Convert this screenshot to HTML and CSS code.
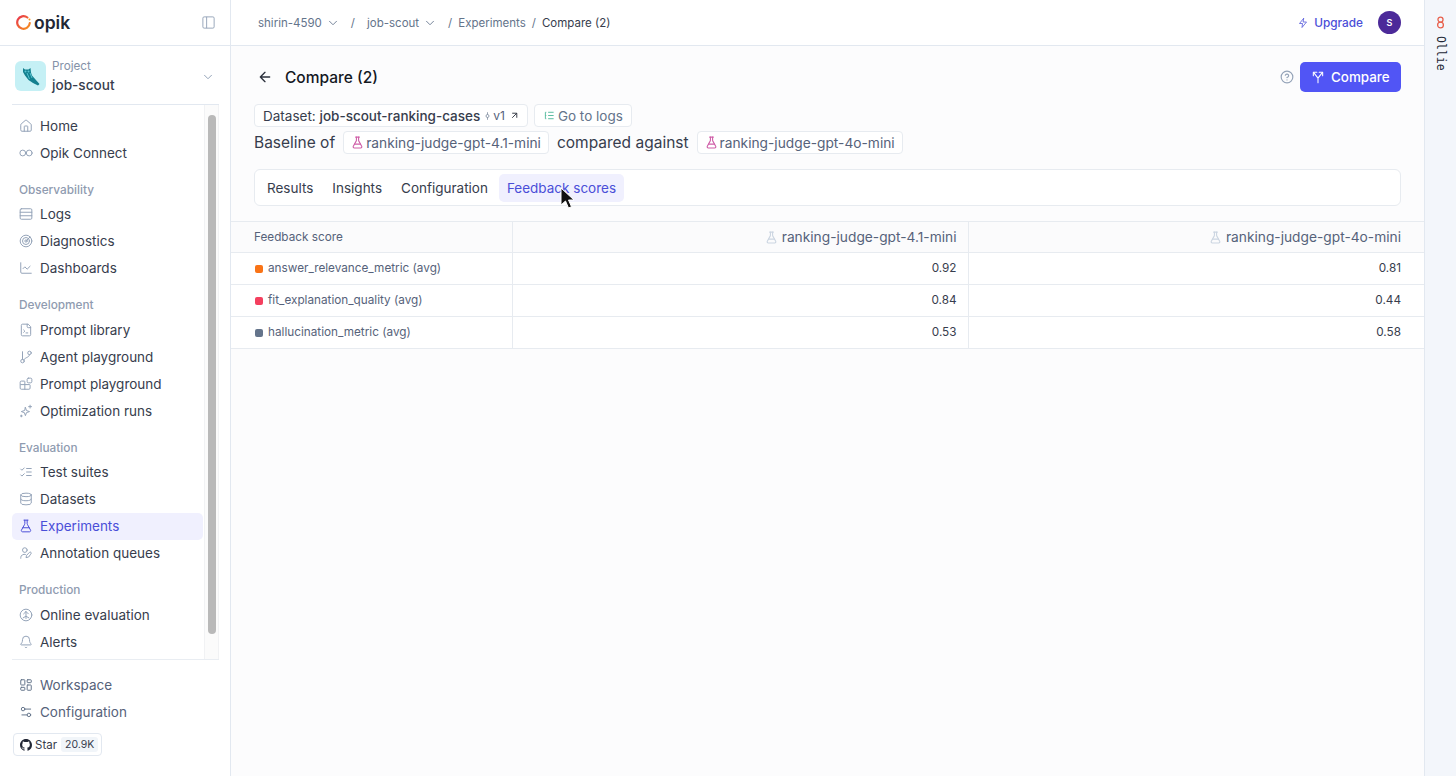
FILE: index.html
```html
<!DOCTYPE html>
<html lang="en">
<head>
    <meta charset="UTF-8">
    <meta name="viewport" content="width=device-width, initial-scale=1.0">
    <title>Compare (2)</title>
    <link rel="stylesheet" href="styles.css">
</head>
<body>

    <!-- Shared icons -->
    <svg class="icon-defs" xmlns="http://www.w3.org/2000/svg">
        <symbol id="i-home" viewBox="0 0 24 24"><path d="M15 21v-8a1 1 0 0 0-1-1h-4a1 1 0 0 0-1 1v8"/><path d="M3 10a2 2 0 0 1 .7-1.500l7-6a2 2 0 0 1 2.600 0l7 6A2 2 0 0 1 21 10v9a2 2 0 0 1-2 2H5a2 2 0 0 1-2-2z"/></symbol>
        <symbol id="i-connect" viewBox="0 0 24 24"><circle cx="6.500" cy="12" r="5"/><circle cx="17.500" cy="12" r="5"/></symbol>
        <symbol id="i-rows" viewBox="0 0 24 24"><rect x="2" y="3" width="20" height="18" rx="2"/><path d="M2 9h20M2 15h20"/></symbol>
        <symbol id="i-radar" viewBox="0 0 24 24"><circle cx="12" cy="12" r="10"/><circle cx="12" cy="12" r="6"/><circle cx="12" cy="12" r="2"/><path d="m13 11 6-6"/></symbol>
        <symbol id="i-chart" viewBox="0 0 24 24"><path d="M3 3v16a2 2 0 0 0 2 2h16"/><path d="m19 9-5 5-4-4-3 3"/></symbol>
        <symbol id="i-file" viewBox="0 0 24 24"><path d="M15 2H6a2 2 0 0 0-2 2v16a2 2 0 0 0 2 2h12a2 2 0 0 0 2-2V7z"/><path d="M14 2v4a2 2 0 0 0 2 2h4"/><path d="m8 12 2 2-2 2M12 17h3"/></symbol>
        <symbol id="i-branch" viewBox="0 0 24 24"><circle cx="6" cy="19" r="3"/><circle cx="18" cy="5" r="3"/><path d="M6 16V3"/><path d="M18 8c0 5-7 4-10 9"/></symbol>
        <symbol id="i-blocks" viewBox="0 0 24 24"><rect x="14" y="2" width="8" height="8" rx="2"/><path d="M10 21V8a1 1 0 0 0-1-1H4a2 2 0 0 0-2 2v10a2 2 0 0 0 2 2h13a2 2 0 0 0 2-2v-5a1 1 0 0 0-1-1H3"/></symbol>
        <symbol id="i-sparks" viewBox="0 0 24 24"><path d="M11 6l1.800 5.200L18 13l-5.200 1.800L11 20l-1.800-5.200L4 13l5.200-1.800z"/><path d="M19 2v5M16.500 4.500h5M4 19v3M2.500 20.500h3"/></symbol>
        <symbol id="i-checks" viewBox="0 0 24 24"><path d="m3 7 2 2 4-4M3 17l2 2 4-4M13 6h8M13 12h8M13 18h8"/></symbol>
        <symbol id="i-db" viewBox="0 0 24 24"><ellipse cx="12" cy="5" rx="9" ry="3"/><path d="M3 5v14a9 3 0 0 0 18 0V5"/><path d="M3 12a9 3 0 0 0 18 0"/></symbol>
        <symbol id="i-flask" viewBox="0 0 24 24"><path d="M14 2v6a2 2 0 0 0 .25 1l5.500 10a2 2 0 0 1-1.750 3H6a2 2 0 0 1-1.750-3l5.500-10A2 2 0 0 0 10 8V2"/><path d="M6.500 15h11"/><path d="M8.500 2h7"/></symbol>
        <symbol id="i-annotate" viewBox="0 0 24 24"><circle cx="10" cy="7" r="4"/><path d="M3 21v-1a6 6 0 0 1 8-5.600"/><path d="M20.500 13.500a1.800 1.800 0 0 0-2.600-2.600L13 16l-1 4 4-1z"/></symbol>
        <symbol id="i-online" viewBox="0 0 24 24"><circle cx="12" cy="12" r="10"/><path d="M12 6v12M8 10l4-4 4 4M7 17l5-3 5 3"/></symbol>
        <symbol id="i-bell" viewBox="0 0 24 24"><path d="M10.300 21a2 2 0 0 0 3.400 0"/><path d="M3.300 15.300A1 1 0 0 0 4 17h16a1 1 0 0 0 .7-1.700C19.400 14 18 12.500 18 8A6 6 0 0 0 6 8c0 4.500-1.400 6-2.700 7.300"/></symbol>
        <symbol id="i-grid" viewBox="0 0 24 24"><rect x="3" y="3" width="7" height="9" rx="1"/><rect x="14" y="3" width="7" height="5" rx="1"/><rect x="14" y="12" width="7" height="9" rx="1"/><rect x="3" y="16" width="7" height="5" rx="1"/></symbol>
        <symbol id="i-settings" viewBox="0 0 24 24"><path d="M20 7h-9M14 17H5"/><circle cx="17" cy="17" r="3"/><circle cx="7" cy="7" r="3"/></symbol>
        <symbol id="i-chevron" viewBox="0 0 24 24"><path d="m6 9 6 6 6-6"/></symbol>
        <symbol id="i-split" viewBox="0 0 24 24"><path d="M12 22v-8L5 5M12 14l7-9"/><path d="M4 10V4h6M20 10V4h-6"/></symbol>
    </svg>

    <div class="app">

        <!-- Sidebar -->
        <aside class="sidebar">
            <div class="logo-row">
                <div class="logo">
                    <svg class="logo-ring" viewBox="0.500 0.500 15 15" fill="none">
                        <defs><linearGradient id="ringGrad" x1="0" y1="0" x2="1" y2="1"><stop offset="0" stop-color="#e8344d"/><stop offset="1" stop-color="#f7941d"/></linearGradient></defs>
                        <path d="M11.900 3A6.300 6.300 0 1 0 14.300 8.500" stroke="url(#ringGrad)" stroke-width="2.200" stroke-linecap="round"/>
                        <circle cx="14" cy="5" r="1" fill="#f7941d"/>
                    </svg>
                    <span class="logo-text">opik</span>
                </div>
                <svg class="collapse-icon" viewBox="0 0 24 24"><rect x="3" y="3" width="18" height="18" rx="2"/><path d="M9 3v18"/></svg>
            </div>

            <div class="project">
                <div class="project-pic">
                    <svg viewBox="0 0 30 30" width="30" height="30">
                        <path d="M7 7l2 1.500h3.500l2-1.500.5 4.500 1 3 3.500 4 4 4.500-1.500 1.500-5-2.500-4.500-3-3.500-4.500-2-3.500z" fill="#13808f"/>
                        <path d="M11 12l2.500 6M14 12l2 5" stroke="#58c3d0" stroke-width="1"/>
                        <circle cx="9.500" cy="10.500" r="1" fill="#58c3d0"/>
                        <circle cx="12.500" cy="10.500" r="1" fill="#58c3d0"/>
                    </svg>
                </div>
                <div class="project-text">
                    <span class="project-label">Project</span>
                    <span class="project-name">job-scout</span>
                </div>
                <svg class="ico project-chevron"><use href="#i-chevron"/></svg>
            </div>

            <div class="nav-area">
                <nav class="nav-list">
                    <a class="nav-item"><svg class="ico"><use href="#i-home"/></svg>Home</a>
                    <a class="nav-item"><svg class="ico"><use href="#i-connect"/></svg>Opik Connect</a>

                    <div class="nav-label">Observability</div>
                    <a class="nav-item"><svg class="ico"><use href="#i-rows"/></svg>Logs</a>
                    <a class="nav-item"><svg class="ico"><use href="#i-radar"/></svg>Diagnostics</a>
                    <a class="nav-item"><svg class="ico"><use href="#i-chart"/></svg>Dashboards</a>

                    <div class="nav-label">Development</div>
                    <a class="nav-item"><svg class="ico"><use href="#i-file"/></svg>Prompt library</a>
                    <a class="nav-item"><svg class="ico"><use href="#i-branch"/></svg>Agent playground</a>
                    <a class="nav-item"><svg class="ico"><use href="#i-blocks"/></svg>Prompt playground</a>
                    <a class="nav-item"><svg class="ico"><use href="#i-sparks"/></svg>Optimization runs</a>

                    <div class="nav-label">Evaluation</div>
                    <a class="nav-item"><svg class="ico"><use href="#i-checks"/></svg>Test suites</a>
                    <a class="nav-item"><svg class="ico"><use href="#i-db"/></svg>Datasets</a>
                    <a class="nav-item active"><svg class="ico"><use href="#i-flask"/></svg>Experiments</a>
                    <a class="nav-item"><svg class="ico"><use href="#i-annotate"/></svg>Annotation queues</a>

                    <div class="nav-label">Production</div>
                    <a class="nav-item"><svg class="ico"><use href="#i-online"/></svg>Online evaluation</a>
                    <a class="nav-item"><svg class="ico"><use href="#i-bell"/></svg>Alerts</a>
                </nav>
                <div class="scroll-track"><div class="scroll-thumb"></div></div>
            </div>

            <div class="sidebar-foot">
                <a class="nav-item muted"><svg class="ico"><use href="#i-grid"/></svg>Workspace</a>
                <a class="nav-item muted"><svg class="ico"><use href="#i-settings"/></svg>Configuration</a>
                <div class="star">
                    <svg class="gh" viewBox="0 0 16 16"><path d="M8 0C3.580 0 0 3.580 0 8c0 3.540 2.290 6.530 5.470 7.590.4.070.55-.17.55-.38 0-.19-.01-.82-.01-1.490-2.010.37-2.530-.49-2.690-.94-.09-.23-.48-.94-.82-1.130-.28-.15-.68-.52-.01-.53.63-.01 1.080.58 1.230.82.72 1.210 1.870.87 2.330.66.07-.52.28-.87.51-1.070-1.780-.2-3.640-.89-3.640-3.950 0-.87.31-1.590.82-2.150-.08-.2-.36-1.020.08-2.120 0 0 .67-.21 2.200.82.64-.18 1.320-.27 2-.27s1.360.09 2 .27c1.530-1.040 2.200-.82 2.200-.82.44 1.100.16 1.920.08 2.120.51.56.82 1.270.82 2.150 0 3.070-1.870 3.750-3.650 3.950.29.25.54.73.54 1.480 0 1.070-.01 1.930-.01 2.200 0 .21.15.46.55.38A8.013 8.013 0 0 0 16 8c0-4.420-3.580-8-8-8z"/></svg>
                    <span>Star</span>
                    <span class="star-count">20.9K</span>
                </div>
            </div>
        </aside>

        <!-- Main column -->
        <div class="main">
            <header class="topbar">
                <div class="crumbs">
                    <span class="crumb">shirin-4590<svg class="ico-sm"><use href="#i-chevron"/></svg></span>
                    <span class="sep sep-wide">/</span>
                    <span class="crumb">job-scout<svg class="ico-sm"><use href="#i-chevron"/></svg></span>
                    <span class="sep sep-tail">/</span>
                    <span class="crumb">Experiments</span>
                    <span class="sep">/</span>
                    <span class="crumb current">Compare (2)</span>
                </div>
                <div class="top-right">
                    <a class="upgrade"><svg class="ico-sm" viewBox="0 0 24 24"><path d="M13 3 5 13h6l-1 8 9-11h-6z"/></svg>Upgrade</a>
                    <span class="avatar">S</span>
                </div>
            </header>

            <main class="content">
                <div class="title-row">
                    <div class="title-left">
                        <svg class="back" viewBox="0 0 24 24"><path d="m12 19-7-7 7-7M19 12H5"/></svg>
                        <h1>Compare (2)</h1>
                    </div>
                    <div class="title-right">
                        <svg class="help" viewBox="0 0 24 24"><circle cx="12" cy="12" r="10"/><path d="M9.100 9a3 3 0 0 1 5.800 1c0 2-3 3-3 3M12 17h.01"/></svg>
                        <button class="button"><svg class="ico-btn"><use href="#i-split"/></svg>Compare</button>
                    </div>
                </div>

                <div class="chip-row">
                    <span class="chip dataset">Dataset:&nbsp;<b>job-scout-ranking-cases</b>
                        <span class="version"><svg viewBox="0 0 24 24"><path d="M12 2v6M12 16v6"/><circle cx="12" cy="12" r="4"/></svg>v1</span>
                        <svg class="out" viewBox="0 0 24 24"><path d="M7 7h10v10M7 17 17 7"/></svg>
                    </span>
                    <span class="chip logs"><svg viewBox="0 0 24 24"><path d="M3 5h2M3 12h2M3 19h2M9 5h12M9 12h12M9 19h12M3 5v14"/></svg>Go to logs</span>
                </div>

                <div class="chip-row baseline">
                    <span>Baseline of</span>
                    <span class="chip exp"><svg><use href="#i-flask"/></svg>ranking-judge-gpt-4.1-mini</span>
                    <span>compared against</span>
                    <span class="chip exp"><svg><use href="#i-flask"/></svg>ranking-judge-gpt-4o-mini</span>
                </div>

                <div class="tabs">
                    <a class="tab">Results</a>
                    <a class="tab">Insights</a>
                    <a class="tab">Configuration</a>
                    <a class="tab active">Feedback scores</a>
                </div>

                <table class="scores">
                    <thead>
                        <tr>
                            <th class="col-name">Feedback score</th>
                            <th class="col-a"><svg><use href="#i-flask"/></svg>ranking-judge-gpt-4.1-mini</th>
                            <th class="col-b"><svg><use href="#i-flask"/></svg>ranking-judge-gpt-4o-mini</th>
                        </tr>
                    </thead>
                    <tbody>
                        <tr>
                            <td class="col-name"><i class="dot orange"></i>answer_relevance_metric (avg)</td>
                            <td class="col-a">0.92</td>
                            <td class="col-b">0.81</td>
                        </tr>
                        <tr>
                            <td class="col-name"><i class="dot red"></i>fit_explanation_quality (avg)</td>
                            <td class="col-a">0.84</td>
                            <td class="col-b">0.44</td>
                        </tr>
                        <tr>
                            <td class="col-name"><i class="dot slate"></i>hallucination_metric (avg)</td>
                            <td class="col-a">0.53</td>
                            <td class="col-b">0.58</td>
                        </tr>
                    </tbody>
                </table>
            </main>
        </div>

        <!-- Ollie side strip -->
        <aside class="strip">
            <svg class="strip-icon" viewBox="0 0 12 18"><circle cx="6" cy="5" r="3.500"/><circle cx="6" cy="12.500" r="4"/></svg>
            <span class="strip-text">Ollie</span>
        </aside>
    </div>

    <!-- Mouse pointer -->
    <svg class="cursor" viewBox="0 0 14 22"><path d="M1 1v17l4.500-4 3 7 3-1.300-3-6.700H14z" fill="#111" stroke="#fff" stroke-width="1"/></svg>

</body>
</html>
```

FILE: styles.css
```css
/* Global */
* {
    box-sizing: border-box;
}

html, body {
    height: 100%;
}

body {
    margin: 0;
    font-family: Inter, "Liberation Sans", sans-serif;
    font-size: 13.500px;
    color: #373d4d;
    background-color: #fff;
    overflow: hidden;
}

.icon-defs {
    display: none;
}

.app {
    display: flex;
    height: 776px;
}

.ico {
    width: 14px;
    height: 14px;
    flex: none;
    fill: none;
    stroke: #94a3b8;
    stroke-width: 1.700;
    stroke-linecap: round;
    stroke-linejoin: round;
}

.ico-sm {
    width: 14px;
    height: 14px;
    flex: none;
    fill: none;
    stroke: currentColor;
    stroke-width: 1.500;
    stroke-linecap: round;
    stroke-linejoin: round;
}

/* Sidebar */
.sidebar {
    width: 231px;
    flex: none;
    display: flex;
    flex-direction: column;
    border-right: 1px solid #e2e8f0;
}

.logo-row {
    height: 46px;
    flex: none;
    display: flex;
    align-items: center;
    justify-content: space-between;
    padding: 0 14px 0 16px;
    border-bottom: 1px solid #e2e8f0;
}

.logo {
    display: flex;
    align-items: center;
    gap: 3px;
}

.logo-ring {
    width: 15px;
    height: 15px;
}

.logo-text {
    font-size: 17.500px;
    font-weight: 600;
    color: #222735;
    line-height: 22px;
}

.collapse-icon {
    width: 15px;
    height: 15px;
    fill: none;
    stroke: #94a3b8;
    stroke-width: 1.500;
}

.project {
    height: 59px;
    flex: none;
    margin: 0 11px 0 12px;
    padding: 2px 3px 0;
    display: flex;
    align-items: center;
    gap: 6px;
    border-bottom: 1px solid #e2e8f0;
}

.project-pic {
    width: 31px;
    height: 30px;
    flex: none;
    border-radius: 6px;
    background-color: #c5f0f5;
    display: flex;
    align-items: center;
    justify-content: center;
}

.project-text {
    flex: 1;
    display: flex;
    flex-direction: column;
}

.project-label {
    font-size: 11.700px;
    line-height: 17px;
    color: #8492a8;
}

.project-name {
    padding-top: 1px;
    font-size: 13.600px;
    line-height: 19px;
    font-weight: 500;
    color: #373d4d;
}

.project-chevron {
    width: 14px;
    height: 14px;
    margin: 2px 1px 0 0;
}

.nav-area {
    flex: 1;
    min-height: 0;
    display: flex;
    border-bottom: 1px solid #e9edf2;
    margin: 0 11px 0 12px;
}

.nav-list {
    flex: 1;
    padding: 7px 1px 0 0;
    min-width: 0;
}

.nav-item {
    height: 27px;
    display: flex;
    align-items: center;
    gap: 7px;
    padding: 0 7px;
    border-radius: 5px;
    color: #373d4d;
    line-height: 20px;
}

.nav-item.active {
    background-color: #f0f0fe;
    color: #4a4ed8;
}

.nav-item.active .ico {
    stroke: #4a4ed8;
}

.nav-item.muted {
    color: #56627a;
}

.nav-item.muted .ico {
    stroke: #64748b;
}

.nav-label {
    height: 21px;
    margin: 13.500px 0 0;
    padding-left: 7px;
    font-size: 11.800px;
    line-height: 21px;
    font-weight: 500;
    color: #8f9bb0;
}

.scroll-track {
    width: 15px;
    flex: none;
    padding: 10px 0 0 3px;
    background-color: #fbfbfb;
    border-left: 1px solid #f1f2f4;
    border-right: 1px solid #f1f2f4;
}

.scroll-thumb {
    width: 8px;
    height: 519px;
    border-radius: 4px;
    background-color: #b9b9b9;
}

.sidebar-foot {
    height: 116px;
    flex: none;
    padding: 11px 11px 0 12px;
}

.star {
    display: inline-flex;
    align-items: center;
    height: 23px;
    margin: 8px 0 0 1px;
    padding: 0 3px 0 6px;
    gap: 3px;
    border: 1px solid #e2e8f0;
    border-radius: 4px;
    font-size: 11.500px;
    color: #373d4d;
}

.gh {
    width: 12px;
    height: 12px;
    fill: #222735;
}

.star-count {
    margin-left: 1px;
    padding: 1px 4px;
    border-radius: 3px;
    background-color: #f1f5f9;
    font-size: 10.500px;
}

/* Top bar */
.main {
    flex: 1;
    min-width: 0;
    display: flex;
    flex-direction: column;
    background-color: #fcfcfd;
}

.topbar {
    height: 46px;
    flex: none;
    display: flex;
    align-items: center;
    justify-content: space-between;
    padding: 0 23px 0 27px;
    background-color: #fff;
    border-bottom: 1px solid #e2e8f0;
}

.crumbs {
    display: flex;
    align-items: center;
    font-size: 11.500px;
    color: #64748b;
}

.crumb {
    display: flex;
    align-items: center;
    gap: 4px;
}

.crumb.current {
    color: #373d4d;
}

.sep {
    margin: 0 6px;
}

.sep-wide {
    margin: 0 12px 0 11px;
}

.sep-tail {
    margin: 0 6px 0 11px;
}

.top-right {
    display: flex;
    align-items: center;
    gap: 15px;
}

.upgrade {
    display: flex;
    align-items: center;
    gap: 5px;
    font-size: 11.800px;
    font-weight: 500;
    color: #4a4ed8;
}

.upgrade .ico-sm {
    width: 12px;
    height: 12px;
}

.avatar {
    width: 23px;
    height: 23px;
    border-radius: 50%;
    background-color: #4c2a99;
    color: #fff;
    font-size: 9px;
    font-weight: 600;
    display: flex;
    align-items: center;
    justify-content: center;
}

/* Page head */
.content {
    flex: 1;
    padding-top: 16px;
}

.title-row {
    display: flex;
    align-items: center;
    justify-content: space-between;
    height: 30px;
    margin: 0 23px 12px 23px;
}

.title-left {
    display: flex;
    align-items: center;
}

.back {
    width: 16px;
    height: 16px;
    margin: 0 12px 0 3px;
    fill: none;
    stroke: #2b303c;
    stroke-width: 2;
    stroke-linecap: round;
    stroke-linejoin: round;
}

h1 {
    margin: 0;
    padding-top: 1px;
    font-size: 15.500px;
    line-height: 24px;
    font-weight: 500;
    color: #14181f;
}

.title-right {
    display: flex;
    align-items: center;
    gap: 6px;
}

.help {
    width: 14px;
    height: 14px;
    fill: none;
    stroke: #94a3b8;
    stroke-width: 2;
    stroke-linecap: round;
}

.button {
    display: flex;
    align-items: center;
    gap: 6px;
    width: 101px;
    height: 30px;
    padding: 0 0 1px 11px;
    border: none;
    border-radius: 5px;
    background-color: #5155f5;
    color: #fff;
    font-family: inherit;
    font-size: 13.400px;
    font-weight: 500;
}

.ico-btn {
    width: 14px;
    height: 14px;
    fill: none;
    stroke: #fff;
    stroke-width: 1.800;
    stroke-linecap: round;
    stroke-linejoin: round;
}

/* Chips */
.chip-row {
    display: flex;
    align-items: center;
    gap: 6px;
    height: 23px;
    margin: 0 23px 4px 23px;
}

.chip-row.baseline {
    gap: 8px;
    margin-bottom: 15px;
    font-size: 15.500px;
    color: #373d4d;
}

.chip {
    display: inline-flex;
    align-items: center;
    height: 23px;
    padding: 0 8px;
    border: 1px solid #e7ebf0;
    border-radius: 4px;
    background-color: #fff;
    font-size: 13.500px;
    color: #56627a;
    white-space: nowrap;
}

.chip.dataset {
    padding-right: 7px;
    color: #373d4d;
}

.chip b {
    font-weight: 500;
    color: #373d4d;
}

.version {
    display: inline-flex;
    align-items: center;
    margin-left: 3px;
    font-size: 12px;
    color: #56627a;
}

.version svg {
    width: 9px;
    height: 12px;
    margin-right: 1px;
    fill: none;
    stroke: #64748b;
    stroke-width: 1.800;
}

.out {
    width: 11px;
    height: 11px;
    margin-left: 4px;
    fill: none;
    stroke: #2b303c;
    stroke-width: 2;
}

.chip.logs {
    padding: 0 8px 0 9px;
    color: #64748b;
}

.chip.logs svg {
    width: 11px;
    height: 11px;
    margin-right: 3px;
    fill: none;
    stroke: #4fb89a;
    stroke-width: 2;
}

.chip.exp {
    padding: 0 7px;
    font-size: 13.750px;
}

.chip.exp svg {
    width: 13px;
    height: 13px;
    margin-right: 2px;
    fill: none;
    stroke: #cf5fa8;
    stroke-width: 2;
    stroke-linecap: round;
    stroke-linejoin: round;
}

/* Tabs */
.tabs {
    display: flex;
    align-items: center;
    gap: 3px;
    height: 37px;
    margin: 0 23px 15px 23px;
    padding: 0 4px;
    border: 1px solid #e7ebf0;
    border-radius: 6px;
    background-color: #fff;
}

.tab {
    height: 28px;
    padding: 0 8px;
    border-radius: 5px;
    line-height: 28px;
    color: #373d4d;
}

.tab.active {
    background-color: #f0f0fe;
    color: #4a4ed8;
}

/* Scores table */
.scores {
    width: 100%;
    table-layout: fixed;
    border-collapse: collapse;
    font-size: 11.750px;
}

.scores th {
    height: 31px;
    padding: 0 12px 1px;
    background-color: #fbfbfc;
    font-weight: 400;
    text-align: right;
    font-size: 13.750px;
    color: #56627a;
    border-top: 1px solid #e7ebf0;
    border-bottom: 1px solid #e7ebf0;
}

.scores th svg {
    width: 13px;
    height: 13px;
    margin-right: 4px;
    vertical-align: -2px;
    fill: none;
    stroke: #cbd5e1;
    stroke-width: 2;
    stroke-linecap: round;
    stroke-linejoin: round;
}

.scores th.col-name {
    font-size: 11.750px;
}

.scores td {
    height: 32px;
    padding: 0 12px 1px;
    background-color: #fff;
    text-align: right;
    color: #373d4d;
    border-bottom: 1px solid #e7ebf0;
}

.scores .col-name {
    width: 281px;
    padding-left: 23px;
    text-align: left;
    color: #56627a;
    border-right: 1px solid #e7ebf0;
}

.scores .col-a {
    width: 456px;
    padding-right: 11px;
    border-right: 1px solid #e7ebf0;
}

.scores .col-b {
    padding-right: 23px;
}

.dot {
    display: inline-block;
    width: 8px;
    height: 8px;
    margin: 0 5px 0 1px;
    border-radius: 2px;
    vertical-align: -0.500px;
}

.dot.orange {
    background-color: #f97316;
}

.dot.red {
    background-color: #f43f5e;
}

.dot.slate {
    background-color: #64748b;
}

/* Side strip */
.strip {
    width: 32px;
    flex: none;
    display: flex;
    flex-direction: column;
    align-items: center;
    padding-top: 16px;
    gap: 7px;
    background-color: #f3f6fb;
    border-left: 1px solid #e2e8f0;
}

.strip-icon {
    width: 9px;
    height: 13px;
    fill: none;
    stroke: #e8604c;
    stroke-width: 1.800;
}

.strip-text {
    writing-mode: vertical-rl;
    font-family: "DejaVu Sans Mono", "Liberation Mono", monospace;
    font-size: 11.500px;
    color: #222735;
}

/* Pointer on top of the page */
.cursor {
    position: absolute;
    left: 560px;
    top: 187px;
    width: 14px;
    height: 22px;
}
```
